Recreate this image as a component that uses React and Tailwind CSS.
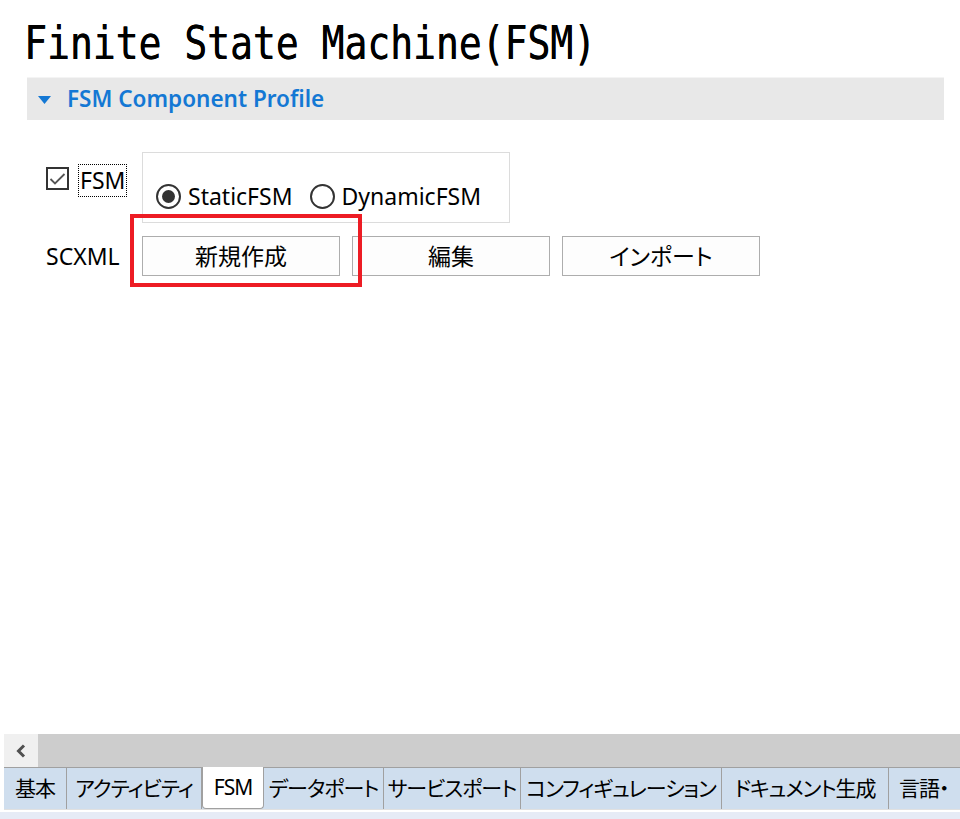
import React from "react";

const jp = "font-['Noto_Sans','Noto_Sans_CJK_JP',sans-serif]";

const tabs = [
      { label: "基本", w: "w-[63px]" },
      { label: "アクティビティ", w: "w-[135px]" },
      { label: "FSM", w: "w-[62px]", active: true },
      { label: "データポート", w: "w-[120px]" },
      { label: "サービスポート", w: "w-[137px]" },
      { label: "コンフィギュレーション", w: "w-[201px]" },
      { label: "ドキュメント生成", w: "w-[167px]" },
      { label: "言語・", w: "w-[80px]", left: true },
];

function Radio({ checked, label }) {
      return (
            <label className="flex items-center gap-[7px]">
                  <span className="w-[25px] h-[25px] rounded-full border-2 border-[#333] flex items-center justify-center bg-white">
                        {checked && <span className="w-[13px] h-[13px] rounded-full bg-[#333]" />}
                  </span>
                  <span className="text-[23px] leading-none text-black">{label}</span>
            </label>
      );
}

function Button({ children }) {
      return (
            <button className="w-[198px] h-[40px] border border-[#adadad] bg-[#fdfdfd] text-[23px] leading-none text-black [font-feature-settings:'palt']">
                  {children}
            </button>
      );
}

export default function App() {
      return (
            <div className={`w-[960px] h-[819px] bg-white flex flex-col overflow-hidden relative ${jp}`}>
                  {/* title */}
                  <div className="h-[77px] pl-[24px] pt-[21px]">
                        <h1 className="inline-block origin-top scale-y-[1.2] font-['DejaVu_Sans_Mono',monospace] text-[38px] leading-[38px] text-black tracking-normal [text-shadow:0.4px_0_0_#000]">
                              Finite State Machine(FSM)
                        </h1>
                  </div>

                  {/* section header */}
                  <div className="ml-[27px] mr-[16px] h-[43px] bg-[#e8e8e8] border-t border-[#f4f4f4] flex items-center pl-[11px] gap-[16px]">
                        <svg width="13" height="8" viewBox="0 0 13 8" className="mt-[1px]">
                              <path d="M0 0 L13 0 L6.5 8 Z" fill="#1478d4" />
                        </svg>
                        <span className="text-[22.5px] font-semibold text-[#1478d4] leading-none">FSM Component Profile</span>
                  </div>

                  {/* content */}
                  <div className="pl-[46px] pt-[32px] grid grid-cols-[96px_auto] gap-y-[13px] items-start">
                        <div className="flex items-start pt-[12px] gap-[9px]">
                              <span className="mt-[3px] w-[23px] h-[23px] border-[2.5px] border-[#333] flex items-center justify-center bg-white">
                                    <svg width="17" height="14" viewBox="0 0 17 14">
                                          <path d="M1.5 7 L6 11.5 L15.5 2" stroke="#555" strokeWidth="1.8" fill="none" />
                                    </svg>
                              </span>
                              <span className="border border-dotted border-black px-[1px] h-[33px] flex items-center text-[23px] leading-none text-black">
                                    FSM
                              </span>
                        </div>
                        <div className="w-[368px] h-[71px] border border-[#dcdcdc] flex items-end gap-[17px] pl-[13px] pb-[13px]">
                              <Radio checked label="StaticFSM" />
                              <Radio label="DynamicFSM" />
                        </div>

                        <div className="h-[40px] flex items-center text-[23px] text-black leading-none">SCXML</div>
                        <div className="flex gap-[12px]">
                              <Button>新規作成</Button>
                              <Button>編集</Button>
                              <Button>インポート</Button>
                        </div>
                  </div>

                  {/* annotation */}
                  <div className="absolute left-[130px] top-[214px] w-[232px] h-[73px] border-4 border-[#ed1c24]" />

                  <div className="flex-1" />

                  {/* horizontal scrollbar */}
                  <div className="ml-[4px] h-[33px] bg-[#cdcdcd] flex">
                        <div className="w-[34px] h-full bg-[#f0f0f0] flex items-center justify-center">
                              <svg width="14" height="16" viewBox="0 0 14 16">
                                    <path d="M10 2.5 L4.5 8 L10 13.5" stroke="#505050" strokeWidth="3" fill="none" />
                              </svg>
                        </div>
                  </div>

                  {/* tabs */}
                  <div className="ml-[4px] h-[42px] bg-[#cfdeee] border-t border-[#a0a0a0] flex [font-feature-settings:'palt']">
                        {tabs.map((t) => (
                              <div
                                    key={t.label}
                                    className={`${t.w} shrink-0 flex items-center whitespace-nowrap text-[21px] tracking-[-1px] leading-none text-black ${
                                          t.left ? "justify-start pl-[10px]" : "justify-center"
                                    } ${
                                          t.active
                                                ? "bg-white -mt-[1px] h-[42px] border-x border-b border-[#a0a0a0] rounded-b-[4px]"
                                                : "h-full border-r border-[#a0a0a0]"
                                    }`}
                              >
                                    {t.label}
                              </div>
                        ))}
                  </div>
                  <div className="h-[3px] bg-white ml-[4px] border-t border-[#e0e0e0]" />
                  <div className="h-[7px] bg-[#e6ebf6]" />
            </div>
      );
}
